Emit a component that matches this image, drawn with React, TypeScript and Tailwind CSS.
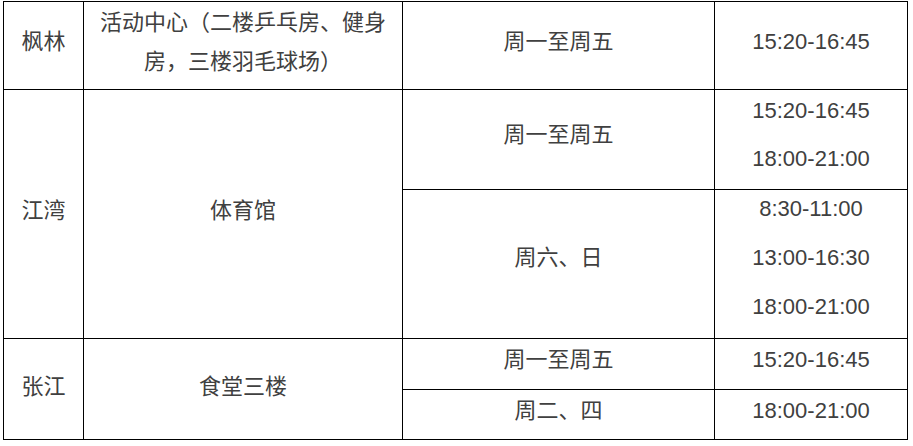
import React from "react";

const cell =
  "border-r border-b border-black flex items-center justify-center text-center";

export default function App() {
  return (
    <div
      className="w-[913px] h-[446px] bg-white pl-[3px] pt-[1px] text-[#404040] text-[22px] leading-[39px]"
      style={{ fontFamily: '"Liberation Sans", "Noto Sans CJK SC", sans-serif' }}
    >
      <div className="grid grid-cols-[80px_319px_312px_193px] grid-rows-[88px_100px_149px_51px_50px] w-[905px] border-l border-t border-black">
        <div className={`${cell} pb-[8px]`}>枫林</div>
        <div className={`${cell} px-[10px] pb-[8px]`}>活动中心（二楼乒乓房、健身房，三楼羽毛球场）</div>
        <div className={`${cell} pb-[9px]`}>周一至周五</div>
        <div className={`${cell} pb-[9px]`}>15:20-16:45</div>

        <div className={`${cell} row-span-2 pb-[8px]`}>江湾</div>
        <div className={`${cell} row-span-2 pb-[8px]`}>体育馆</div>
        <div className={`${cell} pb-[10px]`}>周一至周五</div>
        <div className={`${cell} flex-col leading-[48px] pb-[10px]`}>
          <span>15:20-16:45</span>
          <span>18:00-21:00</span>
        </div>
        <div className={`${cell} pb-[14px]`}>周六、日</div>
        <div className={`${cell} flex-col leading-[49px] pb-[14px]`}>
          <span>8:30-11:00</span>
          <span>13:00-16:30</span>
          <span>18:00-21:00</span>
        </div>

        <div className={`${cell} row-span-2 pb-[6px]`}>张江</div>
        <div className={`${cell} row-span-2 pb-[6px]`}>食堂三楼</div>
        <div className={`${cell} pb-[9px]`}>周一至周五</div>
        <div className={`${cell} pb-[9px]`}>15:20-16:45</div>
        <div className={`${cell} pb-[9px]`}>周二、四</div>
        <div className={`${cell} pb-[9px]`}>18:00-21:00</div>
      </div>
    </div>
  );
}
